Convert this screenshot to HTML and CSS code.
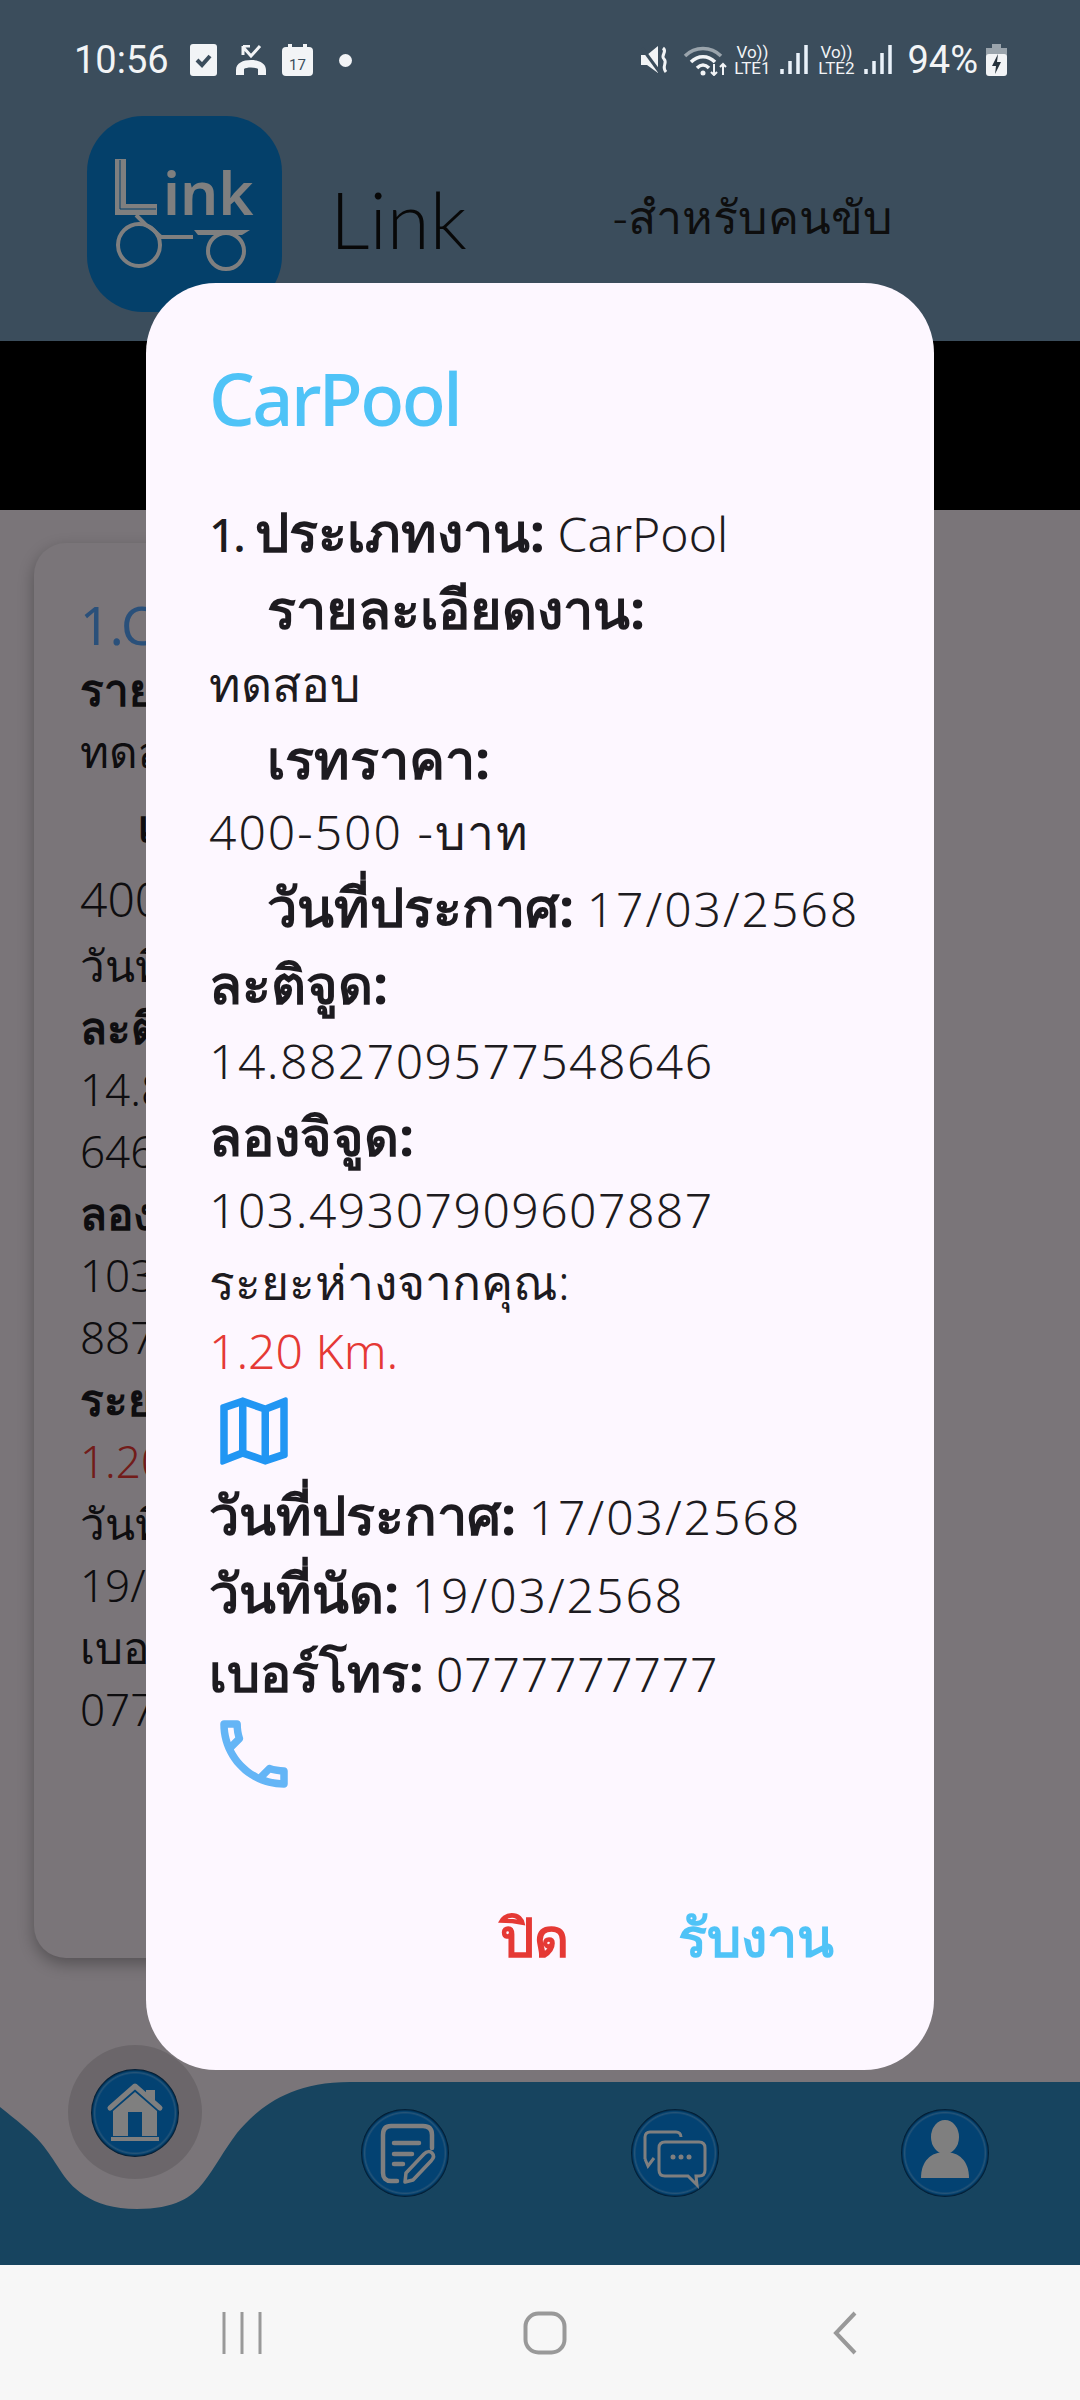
FILE: index.html
```html
<!DOCTYPE html>
<html lang="en">
<head>
    <meta charset="UTF-8">
    <meta name="viewport" content="width=device-width, initial-scale=1.0">
    <title>Link</title>
    <link rel="stylesheet" href="styles.css">
</head>
<body>
    <div class="top">
        <div class="status-bar">
            <div class="status-left">
                <span class="time">10:56</span>
                <svg class="st-check" viewBox="0 0 27 32"><rect width="27" height="32" rx="3" fill="#f2f4f6"/><path d="M7 16l5 5 8-9" fill="none" stroke="#3b4d5c" stroke-width="4"/></svg>
                <svg class="st-missed" viewBox="0 0 32 30"><path d="M1 30v-5c0-7 7-10 15-10s15 3 15 10v5h-8v-6c-2-2-12-2-14 0v6z" fill="#f2f4f6"/><path d="M8 1v9M8 1h7M8 2l8 9 9-10" fill="none" stroke="#f2f4f6" stroke-width="3"/></svg>
                <svg class="st-cal" viewBox="0 0 31 32"><rect y="3" width="31" height="29" rx="4" fill="#f2f4f6"/><rect x="6" width="4" height="6" fill="#f2f4f6"/><rect x="21" width="4" height="6" fill="#f2f4f6"/><text x="15.5" y="26" class="st-cal-num">17</text></svg>
                <span class="st-dot"></span>
            </div>
            <div class="status-right">
                <svg class="st-mute" viewBox="0 0 30 30"><path d="M0 10h6l11-9v27L6 20H0z" fill="#f2f4f6"/><path d="M1 3l19 26" stroke="#3b4d5c" stroke-width="3"/><path d="M22 3c5 4-3 7 1 11s-3 7 2 13" fill="none" stroke="#f2f4f6" stroke-width="3"/></svg>
                <svg class="st-wifi" viewBox="0 0 45 32"><path d="M2 12C12 2 28 2 38 12" fill="none" stroke="#9aa4ac" stroke-width="3.5"/><path d="M8 18c7-7 17-7 24 0M14 24c4-4 8-4 12 0" fill="none" stroke="#f2f4f6" stroke-width="3.5"/><circle cx="20" cy="29" r="2.5" fill="#f2f4f6"/><path d="M31 20v11M28 28l3 3 3-3M40 31V20M37 23l3-3 3 3" fill="none" stroke="#f2f4f6" stroke-width="2"/></svg>
                <span class="st-lte">Vo))<br>LTE1</span>
                <svg class="st-signal" viewBox="0 0 28 32"><path d="M2 25v5M10 17v13M18 9v21M26 1v29" stroke="#eaf2fa" stroke-width="3.5"/></svg>
                <span class="st-lte">Vo))<br>LTE2</span>
                <svg class="st-signal" viewBox="0 0 28 32"><path d="M2 25v5M10 17v13M18 9v21M26 1v29" stroke="#eaf2fa" stroke-width="3.5"/></svg>
                <span class="st-pct">94%</span>
                <svg class="st-batt" viewBox="0 0 21 32"><rect x="6" width="9" height="5" fill="#9aa4ac"/><rect y="4" width="21" height="11" fill="#9aa4ac"/><rect y="10" width="21" height="22" rx="3" fill="#f2f4f6"/><path d="M12 10l-6 12h4l-1 8 6-12h-4z" fill="#26323c"/></svg>
            </div>
        </div>

        <header class="header">
            <svg class="logo" viewBox="0 0 195 196">
                <rect width="195" height="196" rx="56" fill="#0880d4"/>
                <path d="M28 43h11v45h31v11H28z" fill="#fefeff"/>
                <path d="M33 44v49h36" fill="none" stroke="#0880d4" stroke-width="1"/>
                <text x="76" y="99" class="logo-text">ink</text>
                <circle cx="52" cy="129" r="21" fill="none" stroke="#fefeff" stroke-width="4"/>
                <circle cx="139" cy="135" r="18" fill="none" stroke="#fefeff" stroke-width="4"/>
                <path d="M49 99l10 10M59 109c8 4 12 10 15 12h32" fill="none" stroke="#fefeff" stroke-width="4"/>
                <path d="M107 114h56l-8 5h-44z" fill="#fefeff"/>
            </svg>
            <div class="app-name">Link</div>
            <div class="app-sub">-สำหรับคนขับ</div>
        </header>
    </div>

    <div class="band"></div>

    <main class="content">
        <div class="job-card">
            <div class="job-title">1.CarPool</div>
            <div class="job-line bold">รายละเอียดงาน:</div>
            <div class="job-line">ทดสอบ</div>
            <div class="job-line bold indent">เรทราคา:</div>
            <div class="job-line big">400-500 -บาท</div>
            <div class="job-line">วันที่ประกาศ:</div>
            <div class="job-line bold">ละติจูด:</div>
            <div class="job-line">14.8827095775</div>
            <div class="job-line">646</div>
            <div class="job-line bold">ลองจิจูด:</div>
            <div class="job-line">103.493079096</div>
            <div class="job-line">887</div>
            <div class="job-line bold">ระยะห่าง:</div>
            <div class="job-line red">1.20 Km.</div>
            <div class="job-line">วันที่นัด:</div>
            <div class="job-line">19/03/2568</div>
            <div class="job-line">เบอร์โทร:</div>
            <div class="job-line">0777777777</div>
        </div>
    </main>

    <nav class="bottom-nav">
        <svg class="nav-bg" viewBox="0 0 1080 183" preserveAspectRatio="none"><path d="M0 25C15 37 32 50 41 61C50 72 52 76 60 88C70 104 90 127 137 127C175 127 192 115 203 101C215 86 224 68 237 51C255 30 285 0 350 0H1080V183H0Z" fill="#2e88be"/></svg>
        <div class="nav-item home">
            <span class="halo"></span>
            <div class="nav-btn">
                <svg viewBox="0 0 88 88"><path d="M19 39L44 17l25 22" fill="none" stroke="#fff" stroke-width="5" stroke-linecap="round" stroke-linejoin="round"/><path d="M55 21h9v11l-9-8zM22 42l22-19 22 19v25H51V43H37v24H22zM20 68h48v4H20z" fill="#fff"/></svg>
            </div>
        </div>
        <div class="nav-item">
            <div class="nav-btn">
                <svg viewBox="0 0 88 88"><path d="M36 72h-6c-5 0-8-3-8-8V26c0-6 3-9 8-9h32c6 0 9 3 9 9v13" fill="none" stroke="#fff" stroke-width="4.5" stroke-linecap="round"/><path d="M33 34h25M33 45h18M33 55h9" stroke="#fff" stroke-width="4.5" stroke-linecap="round"/><path d="M45 64L63 45c3-3 6-3 8-1s2 5-1 8L52 71l-8 2z" fill="none" stroke="#fff" stroke-width="3.5" stroke-linejoin="round"/></svg>
            </div>
        </div>
        <div class="nav-item">
            <div class="nav-btn">
                <svg viewBox="0 0 88 88"><path d="M14 50V28c0-3 2-5 5-5h26c3 0 5 2 5 5" fill="none" stroke="#fff" stroke-width="3"/><path d="M14 50l3 7 6-8" fill="none" stroke="#fff" stroke-width="3"/><path d="M34 33h34c4 0 6 2 6 6v22c0 4-2 6-6 6h-3l1 9-9-9H34c-4 0-6-2-6-6V39c0-4 2-6 6-6z" fill="#0684e4" stroke="#fff" stroke-width="3"/><circle cx="42" cy="48" r="2.5" fill="#fff"/><circle cx="50" cy="48" r="2.5" fill="#fff"/><circle cx="58" cy="48" r="2.5" fill="#fff"/></svg>
            </div>
        </div>
        <div class="nav-item">
            <div class="nav-btn">
                <svg viewBox="0 0 88 88"><ellipse cx="44" cy="28" rx="14" ry="17" fill="#fff"/><path d="M20 69c0-17 10-26 24-26s24 9 24 26z" fill="#fff"/></svg>
            </div>
        </div>
    </nav>

    <div class="scrim"></div>

    <section class="dialog">
        <h2 class="dialog-title">CarPool</h2>
        <div class="dialog-body">
            <div class="row h77"><b><span class="idx">1.</span> ประเภทงาน:</b> CarPool</div>
            <div class="row h77 indent"><b>รายละเอียดงาน:</b></div>
            <div class="row h74">ทดสอบ</div>
            <div class="row h74 indent"><b>เรทราคา:</b></div>
            <div class="row h74 num">400-500 -บาท</div>
            <div class="row h74 indent"><b>วันที่ประกาศ:</b> <span class="num">17/03/2568</span></div>
            <div class="row h81"><b>ละติจูด:</b></div>
            <div class="row h74 long">14.882709577548646</div>
            <div class="row h74"><b>ลองจิจูด:</b></div>
            <div class="row h76 long">103.49307909607887</div>
            <div class="row h68">ระยะห่างจากคุณ:</div>
            <div class="row h70 red">1.20 Km.</div>
            <svg class="dialog-icon" viewBox="0 0 24 24"><path fill="#2196f3" d="M20.5 3l-.16.03L15 5.1 9 3 3.36 4.9c-.21.07-.36.25-.36.48V20.5c0 .28.22.5.5.5l.16-.03L9 18.9l6 2.1 5.64-1.9c.21-.07.36-.25.36-.48V3.5c0-.28-.22-.5-.5-.5zM10 5.47l4 1.4v11.66l-4-1.4V5.47zm-5 .99l3-1.01v11.7l-3 1.16V6.46zm14 11.08l-3 1.01V6.86l3-1.16v11.84z"/></svg>
            <div class="row h76"><b>วันที่ประกาศ:</b> <span class="num">17/03/2568</span></div>
            <div class="row h80"><b>วันที่นัด:</b> <span class="num">19/03/2568</span></div>
            <div class="row h80"><b class="narrow">เบอร์โทร:</b> <span class="phone">0777777777</span></div>
            <svg class="dialog-icon phone-icon" viewBox="0 0 24 24"><path fill="#64b5f6" d="M6.54 5c.06.89.21 1.76.45 2.59l-1.2 1.2c-.41-1.2-.67-2.47-.76-3.79h1.51m9.86 12.02c.85.24 1.72.39 2.6.45v1.49c-1.32-.09-2.59-.35-3.8-.75l1.2-1.19M7.5 3H4c-.55 0-1 .45-1 1 0 9.39 7.61 17 17 17 .55 0 1-.45 1-1v-3.49c0-.55-.45-1-1-1-1.24 0-2.45-.2-3.57-.57-.1-.04-.21-.05-.31-.05-.26 0-.51.1-.71.29l-2.2 2.2c-2.83-1.45-5.15-3.76-6.59-6.59l2.2-2.2c.28-.28.36-.67.25-1.02C8.7 6.45 8.5 5.25 8.5 4c0-.55-.45-1-1-1z"/></svg>
        </div>
        <div class="dialog-actions">
            <span class="close">ปิด</span>
            <span class="accept">รับงาน</span>
        </div>
    </section>

    <div class="system-nav">
        <svg class="sys-recent" viewBox="0 0 40 44"><path d="M2 1v42M20 1v42M38 1v42" stroke="#999" stroke-width="3"/></svg>
        <svg class="sys-home" viewBox="0 0 44 44"><rect x="2.5" y="2.5" width="39" height="39" rx="13" fill="none" stroke="#999" stroke-width="4"/></svg>
        <svg class="sys-back" viewBox="0 0 26 44"><path d="M23 2L4 22l19 20" fill="none" stroke="#999" stroke-width="4"/></svg>
    </div>
</body>
</html>
```

FILE: styles.css
```css
* {
    box-sizing: border-box;
}

body {
    position: relative;
    display: flex;
    flex-direction: column;
    width: 1080px;
    height: 2400px;
    margin: 0;
    overflow: hidden;
    background-color: #f4eaf2;
    font-family: "Noto Sans", Roboto, sans-serif;
    color: #1d1b20;
}

svg {
    display: block;
    flex-shrink: 0;
}

.top {
    background-color: #769ab8;
}

.status-bar {
    position: relative;
    z-index: 3;
    display: flex;
    justify-content: space-between;
    align-items: center;
    height: 116px;
    padding: 4px 73px 0 74px;
    color: #f2f4f6;
}

.status-left,
.status-right {
    display: flex;
    align-items: center;
}

.time {
    font-family: Roboto, sans-serif;
    font-size: 38px;
    margin-right: 21px;
}

.st-check { width: 27px; height: 32px; margin-right: 18px; }
.st-missed { width: 32px; height: 30px; margin-right: 15px; }
.st-cal { width: 31px; height: 32px; margin-right: 26px; }
.st-cal-num { font-family: Roboto, sans-serif; font-size: 15px; text-anchor: middle; fill: #3b4d5c; }

.st-dot {
    width: 13px;
    height: 13px;
    border-radius: 50%;
    background-color: #f2f4f6;
}

.st-mute { width: 30px; height: 30px; margin-right: 12px; }
.st-wifi { width: 45px; height: 32px; margin-right: 4px; }

.st-lte {
    width: 40px;
    font-family: Roboto, sans-serif;
    font-size: 17px;
    line-height: 16px;
    text-align: center;
}

.st-signal { width: 28px; height: 32px; margin: 0 8px; }

.st-pct {
    font-family: Roboto, sans-serif;
    font-size: 38px;
    margin: 0 8px 0 7px;
}

.st-batt { width: 21px; height: 32px; }

.header {
    display: flex;
    height: 225px;
    padding-left: 87px;
}

.logo {
    width: 195px;
    height: 196px;
}

.logo-text {
    font-family: "Noto Sans", sans-serif;
    font-size: 60px;
    font-weight: 600;
    fill: #fefeff;
}

.app-name {
    margin: 55px 0 0 48px;
    font-family: Lato, sans-serif;
    font-size: 78px;
    font-weight: 300;
    line-height: 96px;
    color: #111;
}

.app-sub {
    margin: 70px 0 0 146px;
    font-size: 46.5px;
    line-height: 60px;
    font-weight: 300;
    color: #1c1c1c;
}

.band {
    height: 169px;
    background-color: #000;
}

.content {
    flex: 1;
    padding: 33px 0 0 34px;
}

.job-card {
    width: 500px;
    height: 1415px;
    padding: 49px 0 0 46px;
    border-radius: 32px;
    background-color: #f4eaf2;
    box-shadow: 0 6px 16px rgba(0, 0, 0, 0.3);
    font-size: 44px;
    font-weight: 300;
}

.job-title {
    height: 66px;
    font-size: 52px;
    font-weight: 400;
    line-height: 66px;
    color: #55a0f5;
}

.job-line {
    height: 62px;
    line-height: 62px;
    white-space: nowrap;
}

.job-line.big { font-size: 48px; height: 60px; line-height: 60px; margin-bottom: 5px; }
.job-line.bold { font-weight: 700; }
.job-line.indent { height: 87px; line-height: 87px; padding-left: 58px; }
.job-line.red { color: #e53935; }

.bottom-nav {
    position: relative;
    display: grid;
    grid-template-columns: repeat(4, 270px);
    height: 183px;
    padding-top: 27px;
}

.nav-bg {
    position: absolute;
    top: 0;
    left: 0;
    width: 1080px;
    height: 183px;
}

.nav-item {
    position: relative;
    display: flex;
    justify-content: center;
}

.nav-item.home {
    margin-top: -40px;
}

.halo {
    position: absolute;
    top: -24px;
    left: 68px;
    width: 134px;
    height: 134px;
    border-radius: 50%;
    background-color: rgba(0, 0, 0, 0.12);
}

.nav-btn {
    position: relative;
    width: 88px;
    height: 88px;
    border-radius: 50%;
    background: radial-gradient(circle closest-side, #0684e4 0, #0684e4 88%, #4aa8f0 92%, #0880d8 95%, #012a50 100%);
}

.nav-btn svg {
    width: 88px;
    height: 88px;
}

.scrim {
    position: absolute;
    top: 0;
    left: 0;
    width: 1080px;
    height: 2265px;
    z-index: 1;
    background-color: rgba(0, 0, 0, 0.5);
}

.dialog {
    position: absolute;
    top: 283px;
    left: 146px;
    z-index: 2;
    width: 788px;
    height: 1787px;
    padding: 72px 64px 0 63px;
    border-radius: 70px;
    background-color: #fdf7ff;
}

.dialog-title {
    margin: 0 0 52px;
    font-size: 72px;
    letter-spacing: -2.5px;
    line-height: 86px;
    font-weight: 500;
    color: #4fc3f7;
}

.dialog-body {
    font-size: 48px;
    font-weight: 300;
}

.dialog-body b {
    font-size: 54px;
    font-weight: 700;
}

.dialog-body b.narrow {
    font-size: 52px;
}

.dialog-body .idx {
    margin-right: -3px;
    font-size: 46px;
    font-weight: 500;
    letter-spacing: -2px;
}

.row {
    white-space: nowrap;
}

.num { letter-spacing: 2px; }
.long { letter-spacing: 1.5px; }
.phone { letter-spacing: 0.8px; }

.h68 { height: 68px; line-height: 68px; }
.h70 { height: 70px; line-height: 70px; }
.h74 { height: 74px; line-height: 74px; }
.h76 { height: 76px; line-height: 76px; }
.h77 { height: 77px; line-height: 77px; }
.h80 { height: 80px; line-height: 80px; }
.h81 { height: 81px; line-height: 81px; }

.indent { padding-left: 58px; }
.red { color: #e53935; }

.dialog-icon {
    width: 90px;
    height: 90px;
}

.phone-icon {
    margin-top: -3px;
}

.dialog-actions {
    position: absolute;
    right: 100px;
    bottom: 89px;
    display: flex;
    gap: 109px;
    font-size: 54px;
    font-weight: 600;
}

.close { color: #e53935; }
.accept { color: #4fc3f7; }

.system-nav {
    position: relative;
    z-index: 2;
    display: flex;
    align-items: center;
    height: 135px;
    padding: 0 0 0 222px;
    background-color: #f7f7f7;
}

.sys-recent { width: 40px; height: 44px; margin-right: 261px; }
.sys-home { width: 44px; height: 44px; margin-right: 265px; }
.sys-back { width: 26px; height: 44px; }
```
